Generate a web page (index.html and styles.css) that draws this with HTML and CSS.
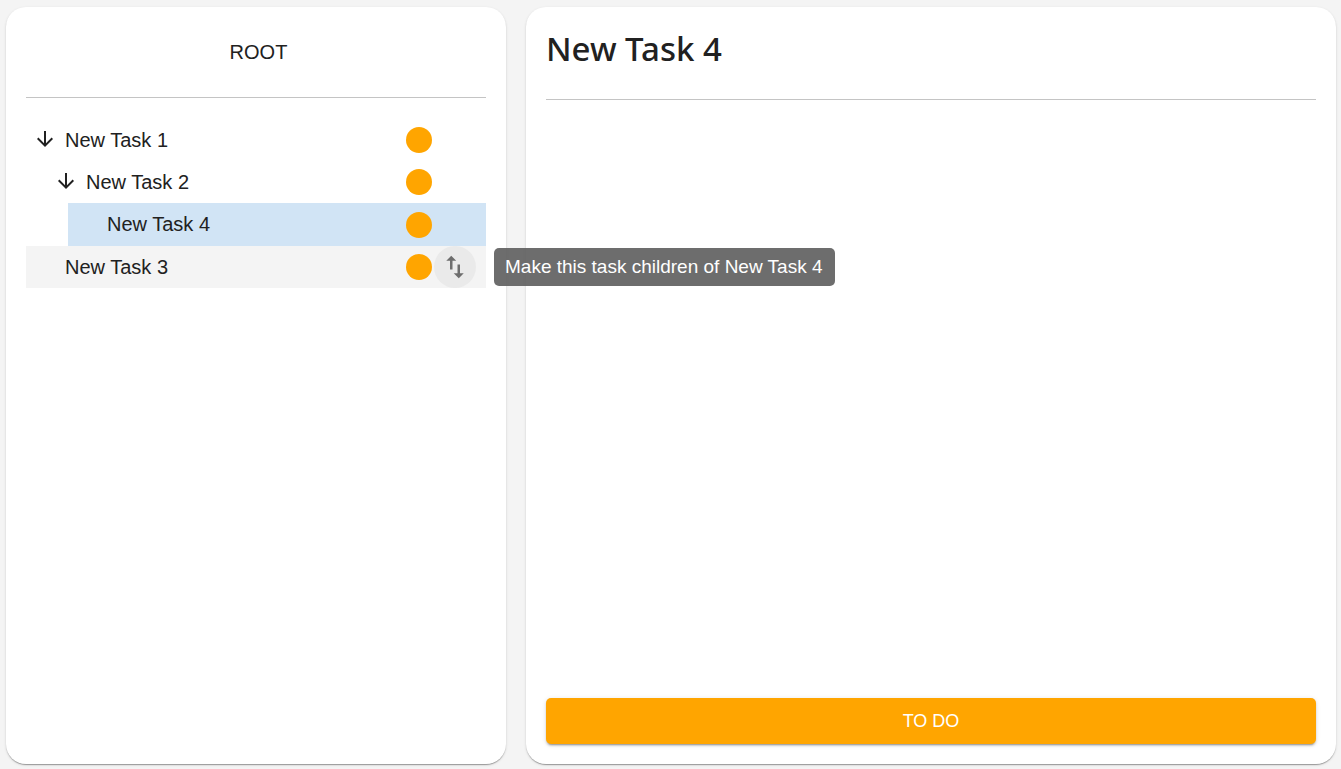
FILE: index.html
```html
<!DOCTYPE html>
<html lang="en">
<head>
<meta charset="utf-8">
<meta name="viewport" content="width=device-width, initial-scale=1">
<title>Tasks</title>
<link rel="stylesheet" href="styles.css">
</head>
<body>
<div class="app">
  <nav class="panel" aria-label="Task tree">
    <button class="root-button" type="button">ROOT</button>
    <hr class="divider">
    <ul class="tree">
      <li>
        <div class="row">
          <button class="toggle" type="button" aria-label="Collapse New Task 1"><svg class="icon" viewBox="0 0 24 24"><path d="m20 11-1.410-1.410L13 15.170V3h-2v12.170l-5.580-5.590L4 11l8 8 8-8z"/></svg></button>
          <a class="name" href="#task-1">New Task 1</a>
          <span class="status"></span>
        </div>
        <ul class="subtree">
          <li>
            <div class="row">
              <button class="toggle" type="button" aria-label="Collapse New Task 2"><svg class="icon" viewBox="0 0 24 24"><path d="m20 11-1.410-1.410L13 15.170V3h-2v12.170l-5.580-5.590L4 11l8 8 8-8z"/></svg></button>
              <a class="name" href="#task-2">New Task 2</a>
              <span class="status"></span>
            </div>
            <ul class="subtree">
              <li>
                <div class="row row-selected">
                  <span class="toggle"></span>
                  <a class="name" href="#task-4">New Task 4</a>
                  <span class="status"></span>
                </div>
              </li>
            </ul>
          </li>
        </ul>
      </li>
      <li>
        <div class="row row-hover">
          <span class="toggle"></span>
          <a class="name" href="#task-3">New Task 3</a>
          <span class="status"></span>
          <button class="move" type="button" aria-label="Move task" aria-describedby="move-tip"><svg class="move-icon" viewBox="0 0 24 24"><path d="M9 3 5 6.990h3V14h2V6.990h3L9 3zm7 14.010V10h-2v7.010h-3L15 21l4-3.990h-3z"/></svg></button>
          <span class="tooltip" id="move-tip" role="tooltip">Make this task children of New Task 4</span>
        </div>
      </li>
    </ul>
  </nav>
  <main class="panel">
    <h1 class="title">New Task 4</h1>
    <hr class="divider">
    <button class="todo" type="button">TO DO</button>
  </main>
</div>
</body>
</html>
```
FILE: styles.css
```css
* {
  box-sizing: border-box;
}

body {
  margin: 0;
  background: #f4f4f4;
  color: #212121;
  font-family: "Liberation Sans", Arial, sans-serif;
  font-size: 20px;
}

button {
  border: 0;
  padding: 0;
  background: none;
  color: inherit;
  font: inherit;
  cursor: pointer;
}

.app {
  display: grid;
  grid-template-columns: 50fr 81fr;
  gap: 20px;
  min-height: 100vh;
  padding: 7px 5px 5px 6px;
}

.panel {
  display: flex;
  flex-direction: column;
  min-width: 0;
  padding: 20px;
  border-radius: 20px;
  background: #fff;
  box-shadow: 0 2px 1px -1px rgba(0, 0, 0, 0.2), 0 1px 1px rgba(0, 0, 0, 0.14), 0 1px 3px rgba(0, 0, 0, 0.12);
}

.root-button {
  height: 50px;
  padding-left: 5px;
}

.divider {
  width: 100%;
  margin: 20px 0 0;
  border: 0;
  border-top: 1px solid #c4c4c4;
}

.tree,
.subtree {
  margin: 0;
  padding: 0;
  list-style: none;
}

.tree {
  padding-top: 21px;
}

.subtree {
  padding-left: 21px;
}

.row {
  position: relative;
  display: flex;
  align-items: center;
  height: 42px;
  padding-right: 10px;
}

.row-selected {
  height: 43px;
  background: #d1e4f5;
}

.row-hover {
  background: #f4f4f4;
}

.toggle {
  display: flex;
  flex: none;
  justify-content: center;
  width: 39px;
  padding-right: 1px;
}

.icon {
  width: 24px;
  height: 24px;
  fill: currentColor;
}

.name {
  flex: 1;
  color: inherit;
  text-decoration: none;
}

.status {
  width: 26px;
  height: 26px;
  margin-right: 44px;
  border-radius: 50%;
  background: #ffa500;
}

.row-hover .status {
  margin-right: 2px;
}

.move {
  display: flex;
  align-items: center;
  justify-content: center;
  width: 42px;
  height: 42px;
  border-radius: 50%;
  background: #eaeaea;
  color: #6d6d6d;
}

.move-icon {
  width: 30px;
  height: 30px;
  fill: currentColor;
}

.tooltip {
  position: absolute;
  left: 100%;
  z-index: 1;
  margin-left: 8px;
  padding: 8px 12px 8px 11px;
  border-radius: 5px;
  background: rgba(97, 97, 97, 0.92);
  color: #fff;
  font-size: 19px;
  line-height: 22px;
  white-space: nowrap;
}

.title {
  margin: 0;
  font-family: "Segoe UI", "Noto Sans", sans-serif;
  font-size: 33px;
  font-weight: 500;
  line-height: 44px;
}

.title + .divider {
  margin-top: 28px;
}

.todo {
  height: 46px;
  margin-top: auto;
  border-radius: 5px;
  background: #ffa500;
  color: #fff;
  font-size: 18px;
  box-shadow: 0 3px 1px -2px rgba(0, 0, 0, 0.2), 0 2px 2px rgba(0, 0, 0, 0.14), 0 1px 5px rgba(0, 0, 0, 0.12);
}
```
